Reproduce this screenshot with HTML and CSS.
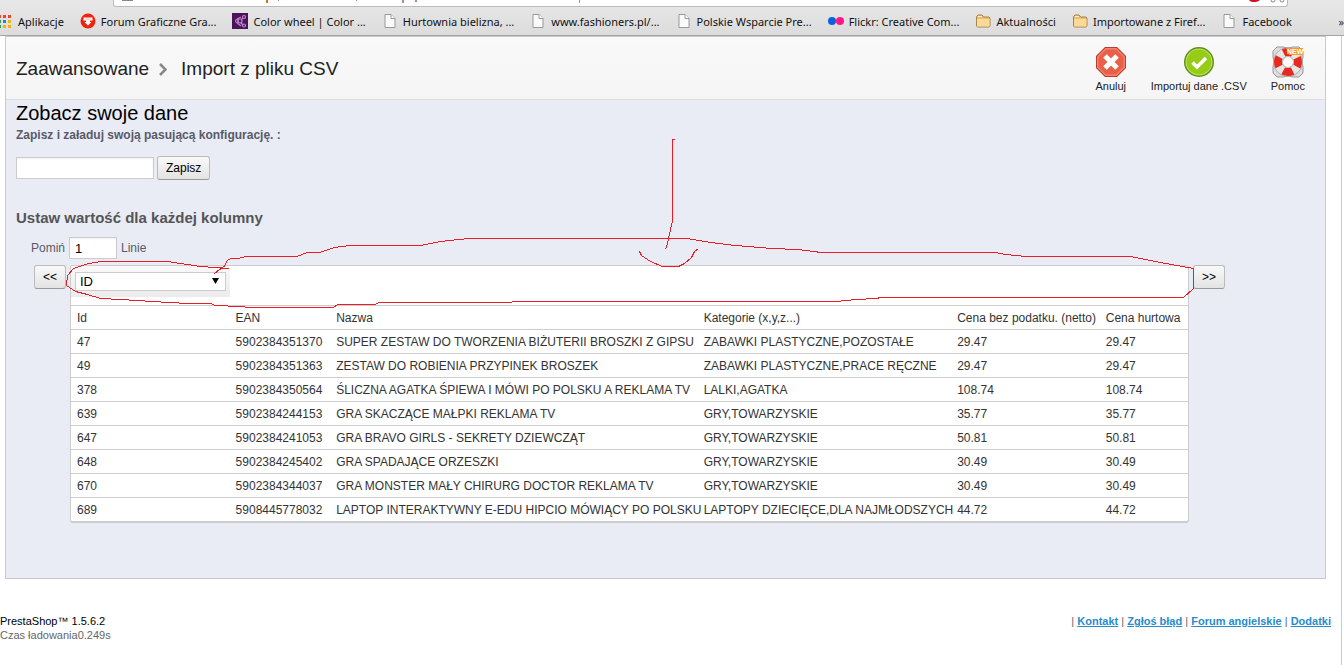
FILE: index.html
```html
<!DOCTYPE html>
<html lang="pl">
<head>
    <meta charset="UTF-8">
    <meta name="viewport" content="width=device-width, initial-scale=1.0">
    <title>Import z pliku CSV</title>
    <link rel="stylesheet" href="styles.css">
</head>
<body>
    <svg class="defs" aria-hidden="true">
        <symbol id="i-page" viewBox="0 0 11 14">
            <path d="M.5.5h6l4 4v9H.5z" fill="#fafafa" stroke="#999"/>
            <path d="M6.5.5v4h4" fill="#fff" stroke="#999"/>
        </symbol>
        <symbol id="i-folder" viewBox="0 0 16 14">
            <path d="M1.500 12V2.500L3 1h4l1.500 2H14l1 1v8l-1 1H2.500z" fill="#e9bd72" stroke="#a9834a"/>
            <path d="M2 5h12.500v7.500H2z" fill="#fbd999"/>
            <path d="M3 2.500h4" stroke="#fff0cc"/>
        </symbol>
    </svg>

    <div class="browser">
        <div class="address-row">
            <div class="address">
                <svg width="1175" height="6" aria-hidden="true">
                    <path d="M8 0h11v1H8z" fill="#888"/>
                    <path d="M152 0h2v3h-2z" fill="#c9772e"/>
                    <path d="M164 0h1v1h-1zM242 0h1v1h-1zM288 0h2v3h-2zM301 0h2v2h-2zM465 0h1v3h-1z" fill="#b98a78"/>
                    <path d="M1135 0h11q-2 2-5 2h-2q-3 0-4-2z" fill="#cf1020"/>
                    <path d="M1157 0a2 2 0 0 0 4 0M1166 0a2 2 0 0 0 4 0" fill="none" stroke="#888"/>
                </svg>
            </div>
        </div>
        <nav class="bookmarks">
            <a class="bookmark apps" href="#">
                <svg width="11" height="13" viewBox="0 0 11 13" aria-hidden="true">
                    <path d="M-2 0h3v3h-3zM3 0h3v3H3zM8 0h3v3H8z" fill="#f0432f"/>
                    <path d="M-2 5h3v3h-3z" fill="#2f9e4f"/><path d="M3 5h3v3H3z" fill="#2f7de1"/><path d="M8 5h3v3H8z" fill="#f5b400"/>
                    <path d="M-2 10h3v3h-3z" fill="#2f9e4f"/><path d="M3 10h3v3H3zM8 10h3v3H8z" fill="#f5b400"/>
                </svg>Aplikacje</a>
            <a class="bookmark" href="#">
                <svg width="16" height="16" viewBox="0 0 16 16" aria-hidden="true">
                    <circle cx="8" cy="8" r="7.500" fill="#ee2410"/>
                    <path d="M3.500 4.500h9v3H10V9h1.500L8 12.500 4.500 9H6V7.500H3.500z" fill="#fff"/>
                    <path d="M5.500 6h5" stroke="#f7a59c"/>
                </svg><span>Forum Graficzne Gra...</span></a>
            <a class="bookmark" href="#">
                <svg width="16" height="16" viewBox="0 0 16 16" aria-hidden="true">
                    <path d="M0 0h16v16H0z" fill="#4a1458"/>
                    <g fill="none" stroke="#c583d3" stroke-width="1.200">
                        <circle cx="8" cy="8" r="2"/><circle cx="5" cy="8" r="1.500"/><circle cx="12" cy="4" r="1.500"/><circle cx="12" cy="12.500" r="1.500"/>
                        <path d="M9.500 6.500L11 5M9 10l2 2M5 6l4-2M5 10l4 3"/>
                    </g>
                </svg><span>Color wheel | Color ...</span></a>
            <a class="bookmark" href="#">
                <svg width="16" height="14" aria-hidden="true"><use href="#i-page"/></svg><span>Hurtownia bielizna, ...</span></a>
            <a class="bookmark" href="#">
                <svg width="16" height="14" aria-hidden="true"><use href="#i-page"/></svg><span>www.fashioners.pl/...</span></a>
            <a class="bookmark" href="#">
                <svg width="16" height="14" aria-hidden="true"><use href="#i-page"/></svg><span>Polskie Wsparcie Pre...</span></a>
            <a class="bookmark" href="#">
                <svg width="16" height="16" viewBox="0 0 16 16" aria-hidden="true">
                    <circle cx="4" cy="8" r="4" fill="#0a63dc"/><circle cx="12" cy="8" r="4" fill="#ff1583"/>
                </svg><span>Flickr: Creative Com...</span></a>
            <a class="bookmark" href="#">
                <svg width="16" height="14" aria-hidden="true"><use href="#i-folder"/></svg>Aktualności</a>
            <a class="bookmark" href="#">
                <svg width="16" height="14" aria-hidden="true"><use href="#i-folder"/></svg>Importowane z Firef...</a>
            <a class="bookmark" href="#">
                <svg width="16" height="14" aria-hidden="true"><use href="#i-page"/></svg>Facebook</a>
            <span class="more">»</span>
        </nav>
    </div>

    <div class="page">
        <main class="panel">
            <header class="page-head">
                <h1>Zaawansowane
                    <svg width="8" height="13" viewBox="0 0 8 13" aria-hidden="true"><path d="M1 1l5.500 5.500L1 12" fill="none" stroke="#888" stroke-width="2.500"/></svg>
                    <span>Import z pliku CSV</span>
                </h1>
                <div class="toolbar">
                    <a class="tool" href="#">
                        <svg width="32" height="32" viewBox="0 0 32 32" aria-hidden="true">
                            <path d="M10 1h12l9 9v12l-9 9H10l-9-9V10z" fill="#b93b2c"/>
                            <path d="M10.500 2h11l8.500 8.500v11L21.500 30h-11L2 21.500v-11z" fill="#f4826f"/>
                            <path d="M11 3.500h10l7.500 7.500v10L21 28.500H11L3.500 21V11z" fill="#e9604a"/>
                            <path d="M10 10l12 12M22 10L10 22" stroke="#fff" stroke-width="5"/>
                        </svg>Anuluj</a>
                    <a class="tool" href="#">
                        <svg width="32" height="32" viewBox="0 0 32 32" aria-hidden="true">
                            <circle cx="16" cy="16" r="15" fill="#5f8f1c"/>
                            <circle cx="16" cy="16" r="13.500" fill="#c2e267"/>
                            <circle cx="16" cy="16" r="12.500" fill="#96cc15"/>
                            <path d="M9.500 16.500l4.500 4.500 9-9" fill="none" stroke="#fff" stroke-width="3.500"/>
                        </svg>Importuj dane .CSV</a>
                    <a class="tool" href="#">
                        <svg width="32" height="32" viewBox="0 0 32 32" aria-hidden="true">
                            <path d="M5 1h6q5 2 10 0h6l4 4v6q-2 5 0 10v6l-4 4h-6q-5-2-10 0H5l-4-4v-6q2-5 0-10V5z" fill="#ddd" stroke="#999"/>
                            <circle cx="16" cy="16" r="10" fill="none" stroke="#aaa" stroke-width="9.500"/>
                            <circle cx="16" cy="16" r="10" fill="none" stroke="#e6e6e6" stroke-width="8"/>
                            <circle cx="16" cy="16" r="10" fill="none" stroke="#e8291f" stroke-width="8" stroke-dasharray="9.700 6.008" stroke-dashoffset="4.850"/>
                            <circle cx="16" cy="16" r="5.500" fill="#fafafa" stroke="#bbb"/>
                            <path d="M14 2h17v7H17z" fill="#f79a1e"/>
                            <text class="badge-text" x="15" y="8">NEW</text>
                        </svg>Pomoc</a>
                </div>
            </header>

            <section class="content">
                <h2>Zobacz swoje dane</h2>
                <label class="config-label" for="config-name">Zapisz i załaduj swoją pasującą konfigurację. :</label>
                <div class="save-row">
                    <input class="field" type="text" id="config-name">
                    <button class="btn" type="button">Zapisz</button>
                </div>

                <h3>Ustaw wartość dla każdej kolumny</h3>
                <div class="skip-row">
                    <label for="skip">Pomiń</label>
                    <input class="field field-small" type="text" id="skip" value="1">
                    <span>Linie</span>
                </div>

                <div class="table-row">
                    <button class="btn btn-nav" type="button">&lt;&lt;</button>
                    <table class="data">
                        <colgroup>
                            <col class="c-id"><col class="c-ean"><col class="c-name"><col class="c-cat"><col class="c-net"><col class="c-whole">
                        </colgroup>
                        <tbody>
                            <tr class="pick-row">
                                <td>
                                    <div class="pick">
                                        <select aria-label="Kolumna"><option>ID</option></select>
                                        <svg width="7" height="6" aria-hidden="true"><path d="M0 0h7L3.500 6z" fill="#000"/></svg>
                                    </div>
                                </td>
                                <td colspan="5"></td>
                            </tr>
                            <tr><td>Id</td><td>EAN</td><td>Nazwa</td><td>Kategorie (x,y,z...)</td><td>Cena bez podatku. (netto)</td><td>Cena hurtowa</td></tr>
                            <tr><td>47</td><td>5902384351370</td><td>SUPER ZESTAW DO TWORZENIA BIŻUTERII BROSZKI Z GIPSU</td><td>ZABAWKI PLASTYCZNE,POZOSTAŁE</td><td>29.47</td><td>29.47</td></tr>
                            <tr><td>49</td><td>5902384351363</td><td>ZESTAW DO ROBIENIA PRZYPINEK BROSZEK</td><td>ZABAWKI PLASTYCZNE,PRACE RĘCZNE</td><td>29.47</td><td>29.47</td></tr>
                            <tr><td>378</td><td>5902384350564</td><td>ŚLICZNA AGATKA ŚPIEWA I MÓWI PO POLSKU A REKLAMA TV</td><td>LALKI,AGATKA</td><td>108.74</td><td>108.74</td></tr>
                            <tr><td>639</td><td>5902384244153</td><td>GRA SKACZĄCE MAŁPKI REKLAMA TV</td><td>GRY,TOWARZYSKIE</td><td>35.77</td><td>35.77</td></tr>
                            <tr><td>647</td><td>5902384241053</td><td>GRA BRAVO GIRLS - SEKRETY DZIEWCZĄT</td><td>GRY,TOWARZYSKIE</td><td>50.81</td><td>50.81</td></tr>
                            <tr><td>648</td><td>5902384245402</td><td>GRA SPADAJĄCE ORZESZKI</td><td>GRY,TOWARZYSKIE</td><td>30.49</td><td>30.49</td></tr>
                            <tr><td>670</td><td>5902384344037</td><td>GRA MONSTER MAŁY CHIRURG DOCTOR REKLAMA TV</td><td>GRY,TOWARZYSKIE</td><td>30.49</td><td>30.49</td></tr>
                            <tr><td>689</td><td>5908445778032</td><td>LAPTOP INTERAKTYWNY E-EDU HIPCIO MÓWIĄCY PO POLSKU</td><td>LAPTOPY DZIECIĘCE,DLA NAJMŁODSZYCH</td><td>44.72</td><td>44.72</td></tr>
                        </tbody>
                    </table>
                    <button class="btn btn-nav" type="button">&gt;&gt;</button>
                </div>
            </section>
        </main>

        <footer class="footer">
            <div>
                <p class="version">PrestaShop™ 1.5.6.2</p>
                <p>Czas ładowania0.249s</p>
            </div>
            <p>| <a href="#">Kontakt</a> | <a href="#">Zgłoś błąd</a> | <a href="#">Forum angielskie</a> | <a href="#">Dodatki</a></p>
        </footer>
    </div>

    <!-- red pen marks over the page -->
    <svg class="marks" width="1344" height="665" viewBox="0 0 1344 665" aria-hidden="true">
        <g fill="none" stroke="#ed1c24" shape-rendering="crispEdges" transform="translate(.5 .5)">
            <path d="M229 268L200 266 167 261H101L88 263 73 268 67 275 66 285 75 291 87 294 100 298 120 299 152 301 187 303 210 303 215 305 239 306 249 307H333L337 304H375L378 302H511L512 301H836L855 299 876 298 880 297H1183L1193 288V268L1160 262 1130 256H1025L1005 254 995 252H821L797 249 772 248 735 245 710 242 687 238H468L440 241 420 245H350L334 247 319 252H307L296 256H245L238 258H230L227 260 223 267 219 269 214 273"/>
            <path d="M674 139H672V220L668 238 666 247 664 249"/>
            <path d="M639 251L641 255 650 261 662 266H678L684 263 691 257 694 251 698 248"/>
        </g>
    </svg>
</body>
</html>
```
FILE: styles.css
```css
* {
    margin: 0;
    padding: 0;
    box-sizing: border-box;
}

body {
    font-family: "Liberation Sans", Arial, sans-serif;
    font-size: 12px;
    color: #333;
    background: #fff;
    min-height: 100vh;
    display: flex;
    flex-direction: column;
    position: relative;
}

.defs {
    position: absolute;
    width: 0;
    height: 0;
}

/* Browser bar */
.browser {
    background: linear-gradient(#e8e8e8, #dcdcdc);
    border-bottom: 1px solid #a5a5a5;
}

.address-row {
    padding: 0 56px 0 113px;
}

.address {
    height: 7px;
    background: #fff;
    border: 1px solid #bbb;
    border-top: 0;
    border-radius: 0 0 3px 3px;
    overflow: hidden;
}

.address svg {
    display: block;
}

.bookmarks {
    height: 28px;
    display: flex;
    align-items: center;
    gap: 16px;
    font-family: "Noto Sans", "Open Sans", sans-serif;
    font-size: 11px;
    white-space: nowrap;
}

.bookmark {
    display: flex;
    align-items: center;
    gap: 5px;
    color: #111;
    text-decoration: none;
}

.bookmark.apps {
    gap: 7px;
}

.bookmark svg {
    flex: none;
}

.more {
    margin-left: auto;
}

/* Page */
.page {
    flex: 1;
    margin-right: 2px;
    border-right: 1px solid #ccc;
}

.panel {
    margin: 0 15px 0 5px;
    border: 1px solid #c9c9d3;
    background: #e9ecf5;
}

.page-head {
    display: flex;
    justify-content: space-between;
    height: 63px;
    padding: 9px 10px 0;
    background: linear-gradient(#f9f9f9, #f5f5f5);
    border-bottom: 1px solid #ddd;
}

h1 {
    display: flex;
    align-items: center;
    gap: 10px;
    height: 46px;
    font-size: 19px;
    font-weight: normal;
    color: #222;
}

h1 span {
    margin-left: 4px;
}

.toolbar {
    display: flex;
    gap: 24px;
    padding-right: 10px;
}

.tool {
    display: flex;
    flex-direction: column;
    align-items: center;
    gap: 1px;
    font-size: 11px;
    line-height: 14px;
    color: #222;
    text-decoration: none;
}

.badge-text {
    font-size: 7px;
    font-weight: bold;
    fill: #fff;
}

.content {
    padding: 1px 10px 55px;
}

h2 {
    margin-bottom: 1px;
    font-size: 20px;
    line-height: 24px;
    font-weight: normal;
    color: #000;
}

h3 {
    margin-top: 28px;
    font-size: 15px;
    line-height: 20px;
    color: #555;
}

.config-label {
    display: block;
    line-height: 18px;
    font-weight: bold;
    color: #585a69;
}

.save-row {
    display: flex;
    align-items: center;
    gap: 3px;
    margin-top: 12px;
}

.field {
    width: 138px;
    height: 22px;
    padding: 0 5px;
    border: 1px solid #ccc;
    background: #fff;
    box-shadow: inset 0 1px 2px #eee;
    font: 13px "Liberation Sans", Arial, sans-serif;
}

.field-small {
    width: 48px;
}

.btn {
    height: 24px;
    padding: 0 8px;
    border: 1px solid #bbb;
    border-bottom-color: #999;
    border-radius: 3px;
    background: linear-gradient(#f9f9f9, #e3e3e3);
    font: 12px "Liberation Sans", Arial, sans-serif;
    color: #000;
}

.skip-row {
    display: flex;
    align-items: center;
    gap: 4px;
    margin: 9px 0 6px 15px;
    color: #585a69;
}

.btn-nav {
    width: 32px;
    padding: 0;
    flex: none;
}

.table-row {
    display: flex;
    align-items: flex-start;
    gap: 4px;
    margin: 0 90px 0 18px;
}

/* Data table */
.data {
    flex: 1;
    width: 100%;
    table-layout: fixed;
    border-spacing: 0;
    border: 1px solid #ccc;
    border-bottom-width: 2px;
    border-radius: 3px;
    background: #fff;
    white-space: nowrap;
}

.c-id { width: 14.2%; }
.c-ean { width: 9%; }
.c-name { width: 32.9%; }
.c-cat { width: 22.7%; }
.c-net { width: 13.3%; }
.c-whole { width: 7.9%; }

.data td {
    height: 24px;
    padding: 0 0 0 6px;
    border-top: 1px solid #ccc;
}

.data .pick-row td {
    height: 39px;
    padding: 0;
    border: 0;
    vertical-align: top;
}

.pick {
    position: relative;
    height: 31px;
    padding: 6px 4px;
    background: linear-gradient(#f9f9f9, #ececec);
}

.pick select {
    display: block;
    width: 100%;
    height: 19px;
    padding: 0 4px;
    border: 1px solid #ccc;
    background: #fff;
    appearance: none;
    font: 13px "Liberation Sans", Arial, sans-serif;
}

.pick svg {
    position: absolute;
    top: 12px;
    right: 11px;
    pointer-events: none;
}

/* Footer */
.footer {
    display: flex;
    justify-content: space-between;
    margin: 35px 10px 0 0;
    font-size: 11px;
    line-height: 14px;
    color: #666;
}

.version {
    color: #000;
}

.footer a {
    font-weight: bold;
    color: #268ccd;
}

.marks {
    position: absolute;
    top: 0;
    left: 0;
    pointer-events: none;
}
```
